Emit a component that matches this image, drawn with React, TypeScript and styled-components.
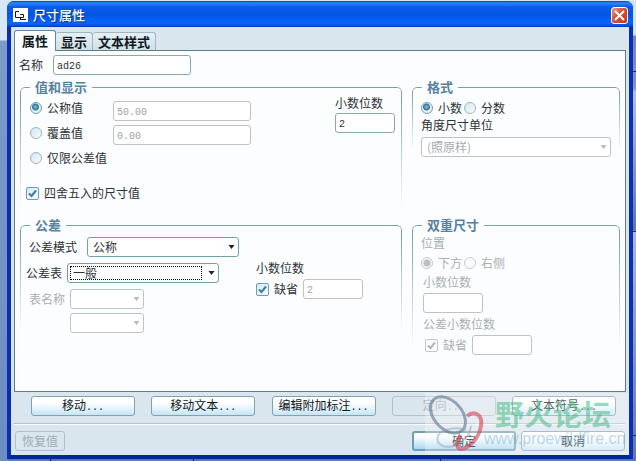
import React, { ReactNode } from 'react';
import styled, { createGlobalStyle, css } from 'styled-components';

const Global = createGlobalStyle`
  * { box-sizing: border-box; }
  html, body, #root { height: 100%; }
  body {
    margin: 0;
    font: 12px/14px "Noto Sans CJK SC", sans-serif;
    color: #2c3337;
    overflow: hidden;
  }
`;

const Desktop = styled.div`
  min-height: 100%;
  padding: 1px 3px 2px 7px;
  background:
    linear-gradient(#0a1a50, #0a1a50) 50px 100% / 1px 3px no-repeat,
    linear-gradient(#0a1a50, #0a1a50) 193px 100% / 1px 3px no-repeat,
    linear-gradient(#0a1a50, #0a1a50) 440px 100% / 1px 3px no-repeat,
    linear-gradient(#16306f, #16306f) 100% 71px / 6px 1px no-repeat,
    linear-gradient(#16306f, #16306f) 100% 231px / 6px 1px no-repeat,
    linear-gradient(#16306f, #16306f) 100% 435px / 6px 1px no-repeat,
    linear-gradient(#d7e7f4 0 40px, #7d9bc6 41px, #6d8cc0 100%) 0 0 / 8px 100% no-repeat,
    linear-gradient(#d3e6f6 0 35px, #6f86cb 36px, #7d92d2 88px, #b2c0e8 92px, #5e72b8 230px, #a9b6df 232px, #5b76bd 100%);
`;

const Dialog = styled.form`
  position: relative;
  display: flex;
  flex-direction: column;
  background: #dae6ee;
  border: solid #0a35c4;
  border-width: 0 4px 4px;
  border-color: #0a35c4 #0a2fb4 #0524a0;
  border-radius: 7px 7px 0 0;
`;

const TitleBar = styled.header`
  display: flex;
  align-items: center;
  gap: 5px;
  height: 26px;
  margin: 0 -4px;
  padding: 2px 5px 0 6px;
  border-radius: 7px 7px 0 0;
  background: linear-gradient(#0b3fb0 0, #2f86f8 2px, #0b5be6 6px, #0455e6 14px, #0566fb 22px, #0459e8 24px, #0338a8 26px);
  color: #fff;
`;

const Title = styled.h1`
  flex: 1;
  margin: 0;
  font-size: 13px;
  line-height: 16px;
  font-weight: 500;
  text-shadow: 1px 1px 0 #0a2c88;
`;

const CloseButton = styled.button`
  display: grid;
  place-items: center;
  width: 17px;
  height: 17px;
  padding: 0;
  border: 1px solid #fff;
  border-radius: 3px;
  background: linear-gradient(135deg, #ee9a80, #da5030 45%, #c03a18);
`;

const TabList = styled.div`
  display: flex;
  align-items: flex-end;
  height: 23px;
  margin: 0 3px;
`;

const Tab = styled.button<{ $active?: boolean }>`
  height: 18px;
  padding: 0 5px;
  border: 1px solid #9fb5bf;
  border-left: 0;
  border-bottom: 0;
  border-radius: 3px 3px 0 0;
  background: linear-gradient(#e6f0f5, #cfe0e8);
  font: bold 13px/16px "Noto Sans CJK SC", sans-serif;
  color: #11181c;
  ${p => p.$active && css`
    z-index: 1;
    height: 21px;
    margin-bottom: -1px;
    padding: 0 7px;
    border: 1px solid #6b8794;
    border-bottom: 0;
    background: #fbfdfe;
  `}
`;

const Panel = styled.div`
  margin: 0 3px;
  padding: 4px 5px 3px;
  border: 1px solid #5f7b86;
  background: #fbfdfe;
`;

const Row = styled.div<{ $gap?: number; $h?: number; $indent?: number }>`
  display: flex;
  align-items: center;
  gap: ${p => p.$gap ?? 5}px;
  min-height: ${p => p.$h ?? 20}px;
  padding-left: ${p => p.$indent ?? 0}px;
`;

const NameRow = styled(Row)`
  margin-left: -1px;
`;

const Groups = styled.div`
  display: grid;
  grid-template-columns: 382fr 208fr;
  column-gap: 10px;
  margin-top: 5px;
`;

const Group = styled.fieldset<{ $tall?: boolean }>`
  position: relative;
  min-width: 0;
  min-height: ${p => (p.$tall ? 170 : 138)}px;
  margin: 0;
  padding: 0 6px;
  border: 0;
  &::before {
    content: '';
    position: absolute;
    inset: -7px 0 8px;
    border: 1px solid #7ba1a8;
    border-bottom: 0;
    border-radius: 5px 5px 0 0;
    mask-image: linear-gradient(#000 10%, transparent);
    pointer-events: none;
  }
`;

const Legend = styled.legend`
  position: relative;
  z-index: 1;
  margin-left: 4px;
  padding: 0 5px;
  background: #fbfdfe;
  font-size: 13px;
  line-height: 14px;
  font-weight: bold;
  color: #5681a0;
`;

const Columns = styled.div<{ $cols: string }>`
  display: grid;
  grid-template-columns: ${p => p.$cols};
`;

const Stack = styled.div<{ $gap?: number; $top?: number; $indent?: number; $end?: number }>`
  display: flex;
  flex-direction: column;
  align-items: flex-start;
  gap: ${p => p.$gap ?? 0}px;
  padding: ${p => p.$top ?? 0}px ${p => p.$end ?? 0}px 0 ${p => p.$indent ?? 0}px;
`;

const Label = styled.label<{ $off?: boolean }>`
  color: ${p => (p.$off ? '#a9b0b3' : 'inherit')};
  white-space: nowrap;
`;

const Choice = styled(Label)`
  display: inline-flex;
  align-items: center;
  gap: 5px;
`;

const Field = styled.input<{ $w: number }>`
  width: ${p => p.$w}px;
  height: 20px;
  padding: 2px 3px 0;
  border: 1px solid #86aab4;
  border-radius: 3px;
  background: #fff;
  font: 10px/14px "Liberation Mono", monospace;
  color: #2c3337;
  &:disabled { border-color: #bcc3c6; color: #9ea5a8; }
`;

const Radio = styled.input.attrs({ type: 'radio' })`
  appearance: none;
  width: 12px;
  height: 12px;
  margin: 0;
  border: 1px solid #9bb4c0;
  border-radius: 50%;
  background: linear-gradient(135deg, #d3e6ef, #f7fcff);
  &:checked {
    border-color: #6f9fb5;
    background: radial-gradient(circle at 45% 40%, #8fc0d4 0, #2f7494 3px, #e4f2f8 4px);
  }
  &:disabled { border-color: #c6cbcd; background: #fbfcfc; }
  &:disabled:checked { background: radial-gradient(circle, #bcc1c3 3px, #f4f6f6 4px); }
`;

const CheckBox = styled.input.attrs({ type: 'checkbox' })`
  appearance: none;
  grid-area: 1 / 1;
  width: 13px;
  height: 13px;
  margin: 0;
  border: 1px solid #6f9db0;
  border-radius: 2px;
  background: linear-gradient(135deg, #d2e9f4, #f8fdff);
  &:disabled { border-color: #c3c8ca; background: #fafbfb; }
`;

const CheckFrame = styled.span`
  display: inline-grid;
  place-items: center;
  svg { grid-area: 1 / 1; z-index: 1; pointer-events: none; }
`;

const SelectFrame = styled.span<{ $w?: number }>`
  display: inline-grid;
  align-items: center;
  width: ${p => (p.$w ? `${p.$w}px` : '100%')};
  svg { grid-area: 1 / 1; justify-self: end; margin-right: 4px; pointer-events: none; }
`;

const SelectBox = styled.select`
  appearance: none;
  grid-area: 1 / 1;
  width: 100%;
  height: 20px;
  padding: 0 5px;
  border: 1px solid #74a0aa;
  border-radius: 3px;
  background: #fff;
  font: 12px/16px "Noto Sans CJK SC", sans-serif;
  color: #2c3337;
  &:disabled { border-color: #bcc3c6; color: #a5abae; opacity: 1; }
`;

const FocusMark = styled.span`
  grid-area: 1 / 1;
  height: 14px;
  margin: 0 17px 0 3px;
  border: 1px dotted #000;
  pointer-events: none;
`;

const Actions = styled.div`
  display: flex;
  justify-content: space-between;
  padding: 4px 13px 7px 20px;
`;

const Button = styled.button<{ $w?: number; $primary?: boolean }>`
  width: ${p => p.$w ?? 104}px;
  height: 20px;
  padding: 0;
  border: 1px solid #7fa3b3;
  border-radius: 3px;
  background: linear-gradient(#fff 30%, #e8f5fc 60%, #c5e4f3);
  font: 12px/16px "Noto Sans CJK SC", sans-serif;
  color: #10181c;
  white-space: nowrap;
  ${p => p.$primary && css`
    border: 2px solid #6f9fae;
    line-height: 14px;
    background: linear-gradient(#fff 20%, #a8d8f2);
  `}
  &:disabled { border-color: #b3bfc6; background: #dae6ee; color: #a0abb2; }
`;

const Dots = styled.span`
  font: 10px/14px "Liberation Mono", monospace;
`;

const Footer = styled.footer`
  display: flex;
  gap: 5px;
  margin: 0 4px 0 3px;
  padding: 7px 0 4px 1px;
  border-top: 1px solid #b4c3cb;
  box-shadow: inset 0 1px #f4f9fc;
`;

const Spacer = styled.span`
  flex: 1;
`;

const Watermark = styled.div`
  position: absolute;
  right: 0;
  bottom: 0;
  display: flex;
  width: 204px;
  height: 62px;
  background: rgba(255, 255, 255, 0.3);
  pointer-events: none;
`;

const Forum = styled.div`
  display: flex;
  flex-direction: column;
  margin-left: -5px;
  white-space: nowrap;
`;

const ForumName = styled.span`
  margin: 3px 0 0 11px;
  font-size: 29px;
  line-height: 34px;
  font-weight: bold;
  color: rgba(70, 185, 130, 0.55);
`;

const ForumSite = styled.span`
  font: 16px/18px "Liberation Sans", sans-serif;
  color: rgba(120, 175, 205, 0.5);
`;

function Check({ label, off }: { label: string; off?: boolean }) {
  return (
    <Choice $off={off}>
      <CheckFrame>
        <CheckBox defaultChecked disabled={off} />
        <svg width="9" height="9" viewBox="0 0 9 9" fill="none" stroke={off ? '#b0b5b7' : '#3c7c9c'} strokeWidth="2">
          <path d="M1 4.5 3.5 7 8 1.5" />
        </svg>
      </CheckFrame>
      {label}
    </Choice>
  );
}

function Option({ name, label, on, off }: { name: string; label: string; on?: boolean; off?: boolean }) {
  return (
    <Choice $off={off}>
      <Radio name={name} defaultChecked={on} disabled={off} />
      {label}
    </Choice>
  );
}

function DropDown({ id, value, w, off, focus, label }: { id: string; value?: string; w?: number; off?: boolean; focus?: boolean; label?: string }) {
  return (
    <SelectFrame $w={w}>
      <SelectBox id={id} disabled={off} aria-label={label}>
        <option>{value ?? ''}</option>
      </SelectBox>
      {focus && <FocusMark />}
      <svg width="7" height="4" viewBox="0 0 7 4" fill={off ? '#b5babc' : '#1c2226'}>
        <path d="M.5 0h6l-3 4z" />
      </svg>
    </SelectFrame>
  );
}

function ActionButton({ children, off }: { children: ReactNode; off?: boolean }) {
  return (
    <Button type="button" disabled={off}>
      {children}
      <Dots>...</Dots>
    </Button>
  );
}

export default function App() {
  return (
    <Desktop>
      <Global />
      <Dialog onSubmit={e => e.preventDefault()}>
        <TitleBar>
          <svg width="15" height="14" viewBox="0 0 15 14">
            <path fill="#fff" d="M0 0h15v14H0z" />
            <path d="M6 3.500H2.500v6h8v-3H7M7.500 9.500v2.500M7 11.500h6" fill="none" stroke="#16181c" />
          </svg>
          <Title>尺寸属性</Title>
          <CloseButton type="button" aria-label="关闭">
            <svg width="11" height="11" viewBox="0 0 11 11" stroke="#fff" strokeWidth="2">
              <path d="M1 1 10 10M10 1 1 10" />
            </svg>
          </CloseButton>
        </TitleBar>

        <TabList role="tablist">
          <Tab type="button" role="tab" aria-selected $active>属性</Tab>
          <Tab type="button" role="tab">显示</Tab>
          <Tab type="button" role="tab">文本样式</Tab>
        </TabList>

        <Panel role="tabpanel">
          <NameRow $gap={10}>
            <Label htmlFor="name">名称</Label>
            <Field id="name" $w={138} defaultValue="ad26" />
          </NameRow>

          <Groups>
            <Group>
              <Legend>值和显示</Legend>
              <Columns $cols="87px 222px 1fr">
                <Stack $top={1} $indent={4}>
                  <Row $h={25}><Option name="value" label="公称值" on /></Row>
                  <Row $h={25}><Option name="value" label="覆盖值" /></Row>
                  <Row $h={25}><Option name="value" label="仅限公差值" /></Row>
                </Stack>
                <Stack $top={7} $gap={4}>
                  <Field $w={138} disabled defaultValue="50.00" aria-label="公称值" />
                  <Field $w={138} disabled defaultValue="0.00" aria-label="覆盖值" />
                </Stack>
                <Stack $top={2} $gap={3}>
                  <Label htmlFor="digits">小数位数</Label>
                  <Field id="digits" $w={60} defaultValue="2" />
                </Stack>
              </Columns>
              <Row $h={46}>
                <Check label="四舍五入的尺寸值" />
              </Row>
            </Group>

            <Group>
              <Legend>格式</Legend>
              <Stack $top={4} $indent={3}>
                <Row $gap={2}>
                  <Option name="format" label="小数" on />
                  <Option name="format" label="分数" />
                </Row>
                <Label htmlFor="unit">角度尺寸单位</Label>
              </Stack>
              <Stack $top={5} $indent={3} $end={3}>
                <DropDown id="unit" value="(照原样)" off />
              </Stack>
            </Group>

            <Group $tall>
              <Legend>公差</Legend>
              <Columns $cols="230px 1fr">
                <Stack $top={5}>
                  <Row $gap={10} $indent={3}>
                    <Label htmlFor="mode">公差模式</Label>
                    <DropDown id="mode" value="公称" w={152} />
                  </Row>
                  <Row $h={32}>
                    <Label htmlFor="table">公差表</Label>
                    <DropDown id="table" value="一般" w={152} focus />
                  </Row>
                  <Row $indent={3}>
                    <Label htmlFor="tname" $off>表名称</Label>
                    <DropDown id="tname" w={74} off />
                  </Row>
                  <Row $indent={44} $h={28}>
                    <DropDown id="tname2" w={74} off label="表名称" />
                  </Row>
                </Stack>
                <Stack $top={29} $gap={4}>
                  <Label htmlFor="tdigits">小数位数</Label>
                  <Row>
                    <Check label="缺省" />
                    <Field id="tdigits" $w={60} disabled defaultValue="2" />
                  </Row>
                </Stack>
              </Columns>
            </Group>

            <Group $tall>
              <Legend>双重尺寸</Legend>
              <Stack $top={4} $indent={3}>
                <Label as="span" $off>位置</Label>
                <Row $gap={2} $h={25}>
                  <Option name="place" label="下方" on off />
                  <Option name="place" label="右侧" off />
                </Row>
              </Stack>
              <Stack $gap={4} $indent={5}>
                <Label htmlFor="ddigits" $off>小数位数</Label>
                <Field id="ddigits" $w={60} disabled />
                <Label htmlFor="dtol" $off>公差小数位数</Label>
                <Row $indent={2}>
                  <Check label="缺省" off />
                  <Field id="dtol" $w={60} disabled />
                </Row>
              </Stack>
            </Group>
          </Groups>
        </Panel>

        <Actions>
          <ActionButton>移动</ActionButton>
          <ActionButton>移动文本</ActionButton>
          <ActionButton>编辑附加标注</ActionButton>
          <ActionButton off>定向</ActionButton>
          <ActionButton>文本符号</ActionButton>
        </Actions>

        <Footer>
          <Button type="button" $w={50} disabled>恢复值</Button>
          <Spacer />
          <Button type="submit" $primary>确定</Button>
          <Button type="button">取消</Button>
        </Footer>

        <Watermark>
          <svg width="64" height="62" viewBox="0 0 64 62" fill="none">
            <ellipse cx="23" cy="22" rx="14" ry="21" transform="rotate(-42 23 22)" stroke="rgba(90,115,140,.6)" strokeWidth="3" />
            <path d="M41 37c-10-4-25-1-28 6-3 8 7 14 18 9 8-4 14-10 15-19" stroke="rgba(150,160,172,.5)" strokeWidth="2" />
            <path d="M42 23c8-6 16-1 14 10-2 12-12 23-20 23-5 0-5-8 0-14" stroke="rgba(215,65,80,.6)" strokeWidth="4" />
          </svg>
          <Forum>
            <ForumName>野火论坛</ForumName>
            <ForumSite>www.proewildfire.cn</ForumSite>
          </Forum>
        </Watermark>
      </Dialog>
    </Desktop>
  );
}
